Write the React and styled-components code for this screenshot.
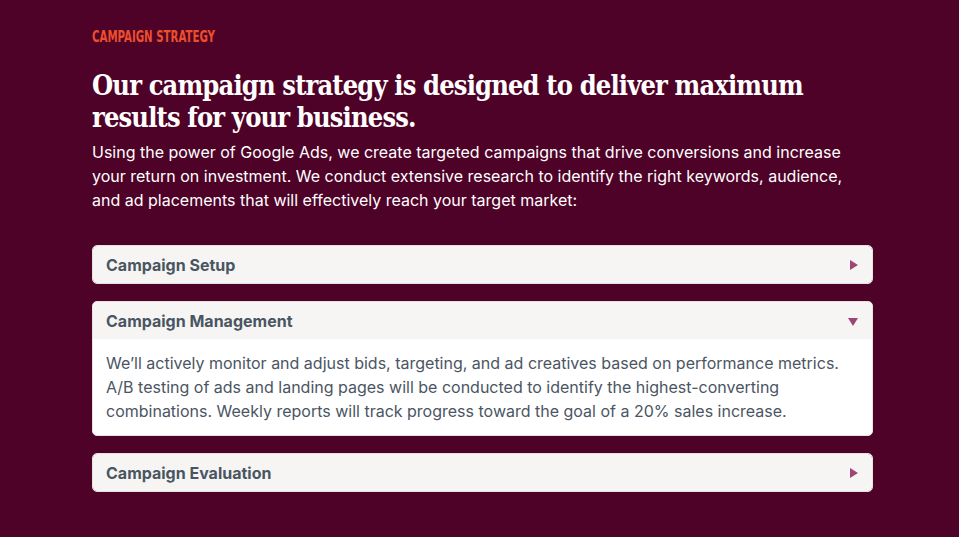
import styled, { createGlobalStyle } from "styled-components";

const GlobalStyle = createGlobalStyle`
    html, body {
        margin: 0;
        padding: 0;
        background: #4f0227;
    }
    * {
        box-sizing: border-box;
    }
`;

const items = [
    { title: "Campaign Setup", open: false },
    {
        title: "Campaign Management",
        open: true,
        text: "We’ll actively monitor and adjust bids, targeting, and ad creatives based on performance metrics. A/B testing of ads and landing pages will be conducted to identify the highest-converting combinations. Weekly reports will track progress toward the goal of a 20% sales increase.",
    },
    { title: "Campaign Evaluation", open: false },
];

export default function App() {
    return (
        <>
            <GlobalStyle />
            <Section>
                <Eyebrow>Campaign Strategy</Eyebrow>
                <Heading>Our campaign strategy is designed to deliver maximum results for your business.</Heading>
                <Lead>
                    Using the power of Google Ads, we create targeted campaigns that drive conversions and increase
                    your return on investment. We conduct extensive research to identify the right keywords, audience,
                    and ad placements that will effectively reach your target market:
                </Lead>
                <Accordion>
                    {items.map((item) => (
                        <Item key={item.title}>
                            <ItemHeader>
                                <ItemTitle>{item.title}</ItemTitle>
                                <Arrow $open={item.open} />
                            </ItemHeader>
                            {item.open && <ItemBody>{item.text}</ItemBody>}
                        </Item>
                    ))}
                </Accordion>
            </Section>
        </>
    );
}

const Section = styled.section`
    width: 959px;
    min-height: 537px;
    padding: 27px 0 0 92px;
    background: #4f0227;
`;

const Eyebrow = styled.div`
    font-family: "DejaVu Sans", "Liberation Sans", sans-serif;
    font-stretch: condensed;
    font-size: 16px;
    line-height: 20px;
    font-weight: 700;
    text-transform: uppercase;
    color: #ec4f2c;
    transform: scaleX(0.71);
    transform-origin: left center;
`;

const Heading = styled.h1`
    margin: 23px 0 0;
    width: 780px;
    font-family: "DejaVu Serif", "Liberation Serif", serif;
    font-stretch: condensed;
    font-weight: 700;
    font-size: 27px;
    line-height: 32px;
    letter-spacing: -0.85px;
    color: #ffffff;
`;

const Lead = styled.p`
    margin: 6px 0 0;
    width: 770px;
    font-family: Inter, "Noto Sans", sans-serif;
    font-size: 16px;
    line-height: 24px;
    color: #ffffff;
`;

const Accordion = styled.div`
    margin-top: 33px;
    width: 781px;
    display: flex;
    flex-direction: column;
    gap: 17px;
`;

const Item = styled.div`
    background: #ffffff;
    border: 1px solid #e6e2de;
    border-radius: 5px;
    overflow: hidden;
`;

const ItemHeader = styled.div`
    display: flex;
    align-items: center;
    justify-content: space-between;
    height: 37px;
    padding: 0 14px 0 13px;
    background: #f6f5f3;
`;

const ItemTitle = styled.span`
    font-family: Inter, "Noto Sans", sans-serif;
    font-weight: 700;
    font-size: 16px;
    color: #4a5562;
`;

const Arrow = styled.span`
    width: 0;
    height: 0;
    ${(p) =>
        p.$open
            ? `border-left: 5px solid transparent;
               border-right: 5px solid transparent;
               border-top: 8px solid #a04377;
               margin-top: 2px;`
            : `border-top: 5px solid transparent;
               border-bottom: 5px solid transparent;
               border-left: 8px solid #a04377;`}
`;

const ItemBody = styled.div`
    padding: 12px 13px 12px;
    font-family: Inter, "Noto Sans", sans-serif;
    font-size: 16px;
    line-height: 24px;
    color: #4b5563;
`;
